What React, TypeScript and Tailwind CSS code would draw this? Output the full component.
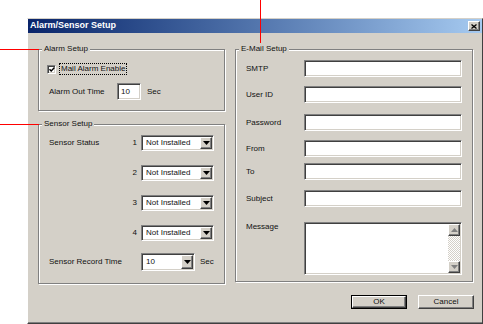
import React from 'react';

const sunken =
  'border border-t-[#808080] border-l-[#808080] border-r-white border-b-white shadow-[inset_1px_1px_0_#404040,inset_-1px_-1px_0_#d4d0c8]';
const raised =
  'border border-t-white border-l-white border-r-[#404040] border-b-[#404040] shadow-[inset_-1px_-1px_0_#808080] bg-[#d4d0c8]';

const Arrow = ({ up = false, color = '#000' }: { up?: boolean; color?: string }) => (
  <svg width="7" height="4" viewBox="0 0 7 4">
    <polygon points={up ? '0,4 7,4 3.5,0' : '0,0 7,0 3.5,4'} fill={color} />
  </svg>
);

const Combo = ({ value, className }: { value: string; className: string }) => (
  <div className={`flex bg-white p-[1px] ${sunken} ${className}`}>
    <span className="flex-1 flex items-center pl-[3px]">{value}</span>
    <div className={`w-[12px] flex items-center justify-center ${raised}`}>
      <Arrow />
    </div>
  </div>
);

const Field = ({ className }: { className: string }) => (
  <div className={`bg-white ${sunken} ${className}`} />
);

const Group = ({
  title,
  className,
  children,
}: {
  title: string;
  className: string;
  children: React.ReactNode;
}) => (
  <fieldset
    className={`border border-[#808080] shadow-[1px_1px_0_#ffffff,inset_1px_1px_0_#ffffff] ${className}`}
  >
    <legend className="ml-[3px] px-[2px] leading-[10px] bg-[#d4d0c8]">{title}</legend>
    {children}
  </fieldset>
);

const emailRows = [
  { label: 'SMTP', mt: 'mt-[6px]' },
  { label: 'User ID', mt: 'mt-[9px]' },
  { label: 'Password', mt: 'mt-[11px]' },
  { label: 'From', mt: 'mt-[9px]' },
  { label: 'To', mt: 'mt-[6px]' },
  { label: 'Subject', mt: 'mt-[10px]' },
];

const sensorRows = [
  { n: '1', mt: 'mt-[6px]', label: 'Sensor Status' },
  { n: '2', mt: 'mt-[14px]', label: '' },
  { n: '3', mt: 'mt-[14px]', label: '' },
  { n: '4', mt: 'mt-[14px]', label: '' },
];

export default function App() {
  return (
    <div className="relative w-[483px] h-[324px] overflow-hidden bg-white text-[8px] text-[#111111] font-['Liberation_Sans',Arial,sans-serif]">
      {/* callout lines */}
      <div className="absolute left-0 top-[49px] w-[39px] h-px bg-[#ff0000]" />
      <div className="absolute left-0 top-[124px] w-[39px] h-px bg-[#ff0000]" />
      <div className="absolute left-[260px] top-0 w-px h-[43px] bg-[#ff0000]" />

      <div className="ml-[27px] mt-[18px] w-[456px] h-[306px] flex flex-col bg-[#d4d0c8] border border-t-[#d4d0c8] border-l-white border-r-[#404040] border-b-[#404040] shadow-[inset_0_-1px_0_#808080]">
        {/* title bar */}
        <div className="h-[14px] flex items-center justify-between pl-[2px] pr-[2px] bg-linear-to-r from-[#0a246a] to-[#a6caf0]">
          <span className="text-white font-bold text-[9px]">Alarm/Sensor Setup</span>
          <div className={`w-[12px] h-[10px] flex items-center justify-center ${raised}`}>
            <svg width="6" height="5" viewBox="0 0 6 5">
              <path d="M0.5 0.5 L5.5 4.5 M5.5 0.5 L0.5 4.5" stroke="#000" strokeWidth="1.3" />
            </svg>
          </div>
        </div>

        {/* body */}
        <div className="flex items-start gap-[10px] pl-[10px] pt-[11px]">
          <div className="w-[187px] flex flex-col">
            <Group title="Alarm Setup" className="h-[67px]">
              <div className="mt-[9px] h-[12px] flex items-center pl-[8px]">
                <div className={`w-[9px] h-[9px] bg-white flex items-center justify-center ${sunken}`}>
                  <svg width="6" height="5" viewBox="0 0 6 5">
                    <path d="M0.5 2.2 L2.2 4 L5.5 0.6" stroke="#000" strokeWidth="1.4" fill="none" />
                  </svg>
                </div>
                <span className="ml-[3px] h-[12px] px-[1px] flex items-center border border-dotted border-black">
                  Mail Alarm Enable
                </span>
              </div>
              <div className="mt-[8px] h-[17px] flex items-center pl-[10px]">
                <span className="w-[68px]">Alarm Out Time</span>
                <div className={`w-[24px] h-[17px] bg-white flex items-center pl-[3px] ${sunken}`}>10</div>
                <span className="ml-[6px]">Sec</span>
              </div>
            </Group>

            <Group title="Sensor Setup" className="mt-[8px] h-[165px]">
              {sensorRows.map((r) => (
                <div key={r.n} className={`${r.mt} h-[16px] flex items-center pl-[10px]`}>
                  <span className="w-[80px]">{r.label}</span>
                  <span className="w-[8px] text-right">{r.n}</span>
                  <Combo value="Not Installed" className="ml-[4px] w-[73px] h-[16px]" />
                </div>
              ))}
              <div className="mt-[12px] h-[18px] flex items-center pl-[10px]">
                <span className="w-[92px]">Sensor Record Time</span>
                <Combo value="10" className="w-[54px] h-[18px]" />
                <span className="ml-[5px]">Sec</span>
              </div>
            </Group>
          </div>

          <Group title="E-Mail Setup" className="w-[238px] h-[238px]">
            {emailRows.map((r) => (
              <div key={r.label} className={`${r.mt} h-[17px] flex items-center pl-[10px]`}>
                <span className="w-[58px]">{r.label}</span>
                <Field className="w-[158px] h-[17px]" />
              </div>
            ))}
            <div className="mt-[15px] flex items-start pl-[10px]">
              <span className="w-[58px] leading-[9px]">Message</span>
              <div className={`w-[158px] h-[53px] flex bg-white p-[1px] ${sunken}`}>
                <div className="flex-1" />
                <div className="w-[12px] flex flex-col">
                  <div className={`h-[12px] flex items-center justify-center ${raised}`}>
                    <Arrow up color="#808080" />
                  </div>
                  <div className="flex-1 bg-[repeating-conic-gradient(#ffffff_0_25%,#d4d0c8_0_50%)] bg-[length:2px_2px]" />
                  <div className={`h-[12px] flex items-center justify-center ${raised}`}>
                    <Arrow color="#808080" />
                  </div>
                </div>
              </div>
            </div>
          </Group>
        </div>

        {/* footer */}
        <div className="mt-[11px] flex justify-end gap-[11px] pr-[8px]">
          <div className="w-[56px] h-[14px] border border-black">
            <div className={`w-full h-full flex items-center justify-center ${raised}`}>OK</div>
          </div>
          <div className={`w-[56px] h-[14px] flex items-center justify-center ${raised}`}>Cancel</div>
        </div>
      </div>
    </div>
  );
}
